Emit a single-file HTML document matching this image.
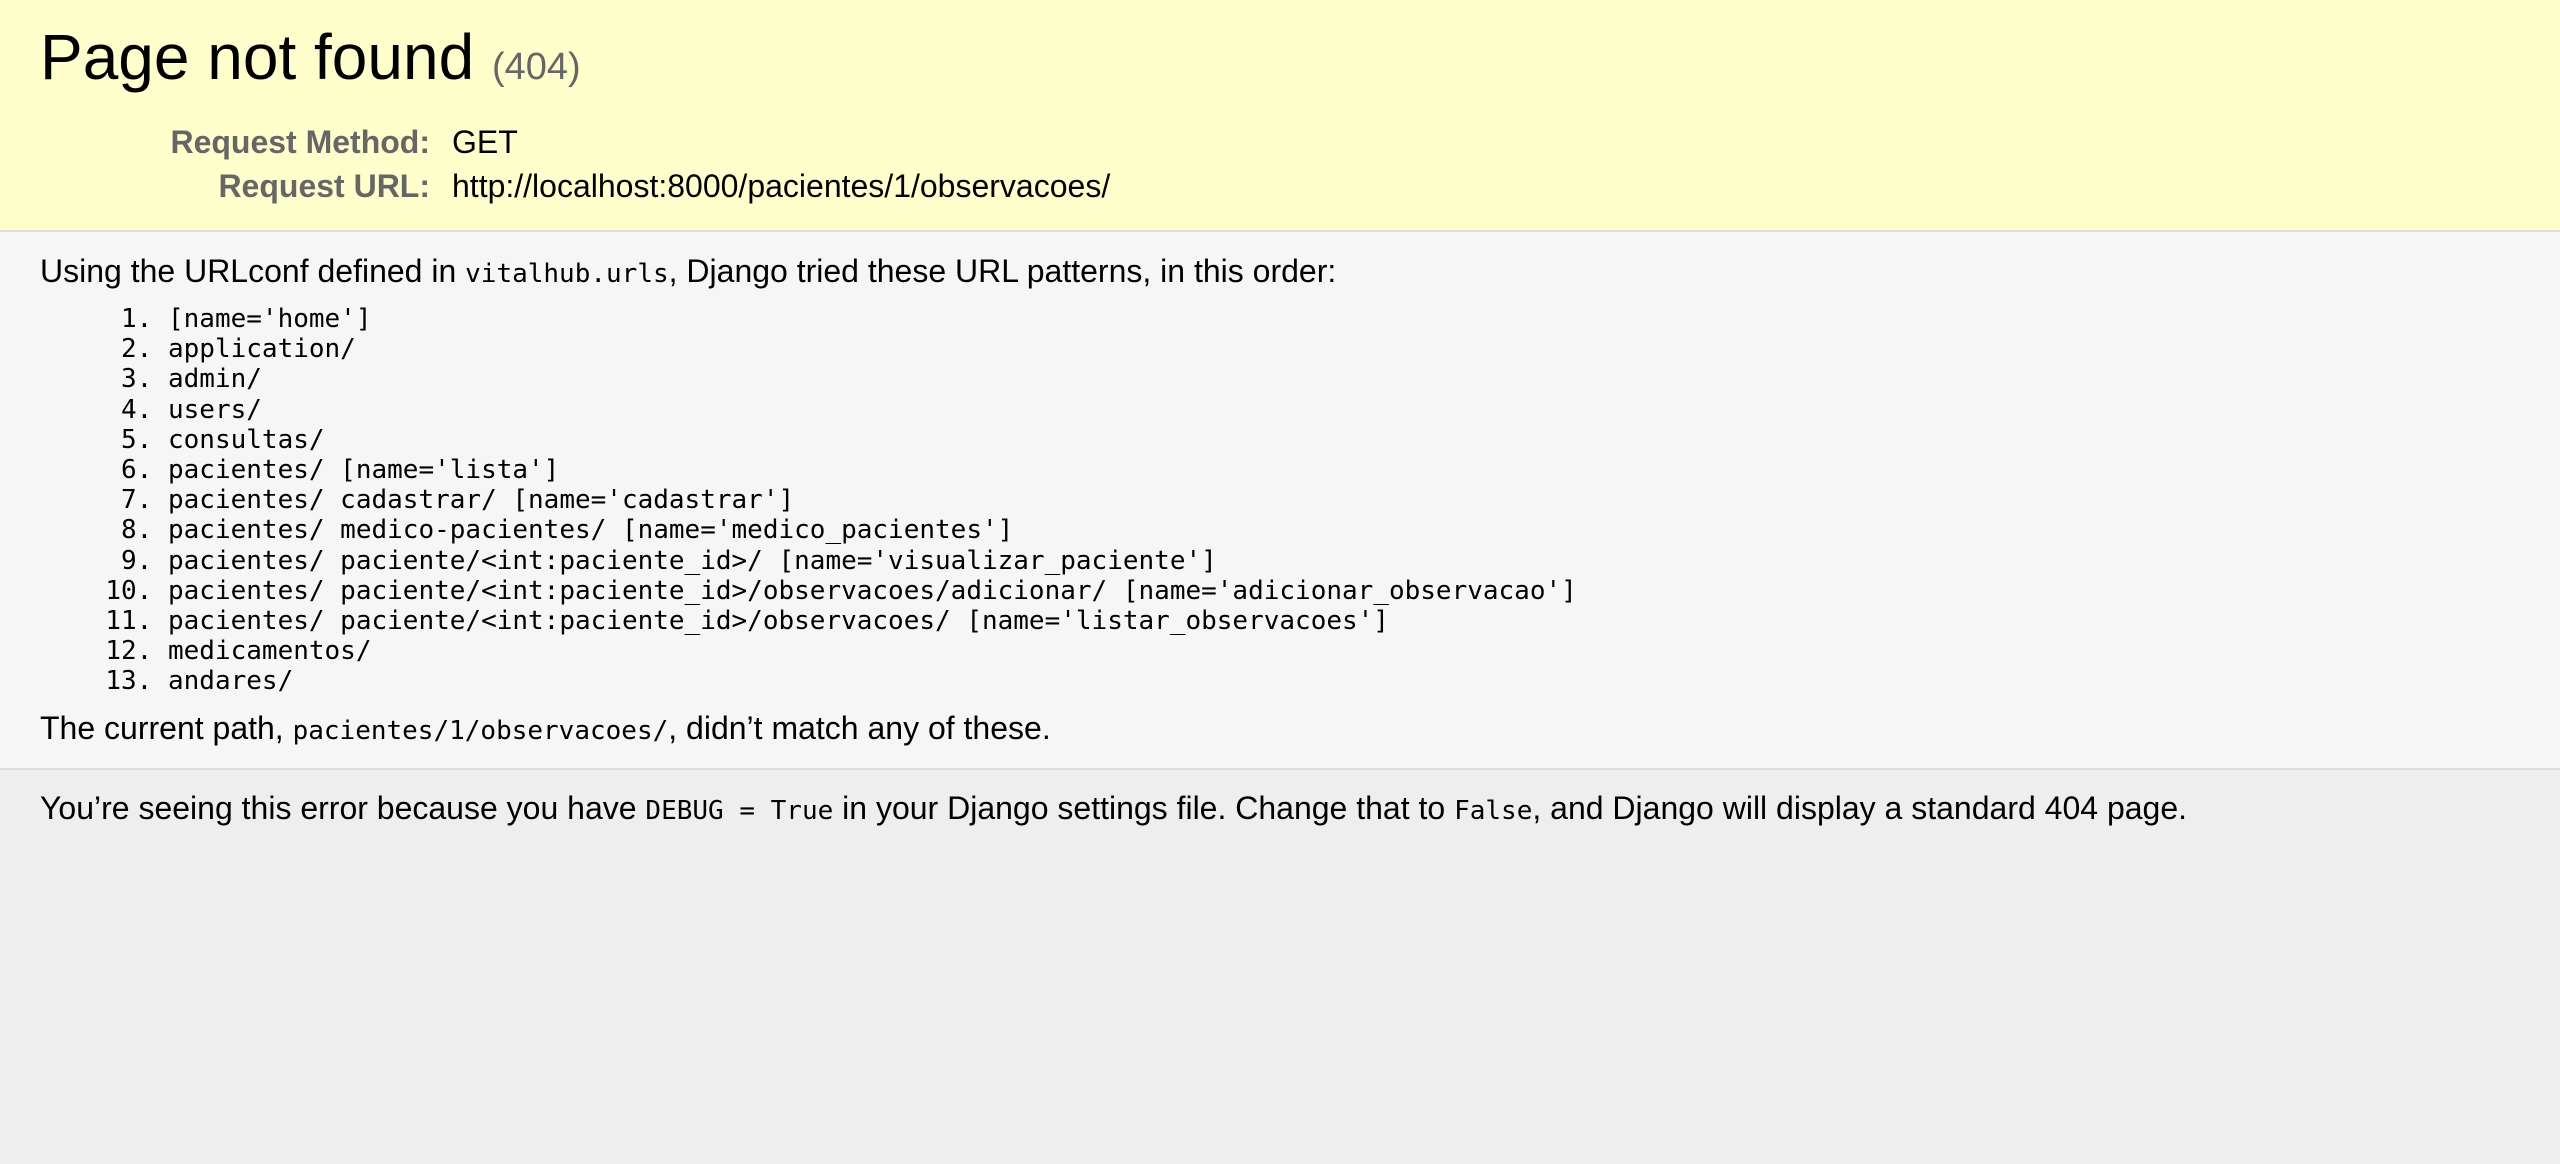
<!DOCTYPE html>
<html><head><meta charset="utf-8"><style>
html,body{margin:0;padding:0;}
body{width:2560px;height:1164px;background:#eee;font-family:"Liberation Sans",Arial,sans-serif;color:#000;position:relative;overflow:hidden;}
.sum{position:absolute;left:0;top:0;width:2560px;height:230px;background:#ffc;border-bottom:2px solid #ddd;}
.info{position:absolute;left:0;top:232px;width:2560px;height:536px;background:#f6f6f6;border-bottom:2px solid #ddd;}
.a{position:absolute;white-space:nowrap;}
h1{position:absolute;left:40px;top:21px;margin:0;font-weight:normal;font-size:64px;line-height:72px;white-space:nowrap;}
h1 span{font-size:38px;color:#666;}
.t{font-size:32px;line-height:44px;}
.lab{font-weight:bold;color:#666;text-align:right;width:430px;left:0;}
.val{left:452px;}
code,.mono{font-family:"DejaVu Sans Mono","Liberation Mono",monospace;font-size:26px;}
ol{position:absolute;left:168px;top:304px;margin:0;padding:0;font-family:"DejaVu Sans Mono","Liberation Mono",monospace;font-size:26px;line-height:30.2px;white-space:nowrap;}
ol li{padding-left:0;}
</style></head><body>
<div class="sum"></div>
<div class="info"></div>
<h1>Page not found <span>(404)</span></h1>
<div class="a t lab" style="top:120px">Request Method:</div>
<div class="a t val" style="top:120px">GET</div>
<div class="a t lab" style="top:164px">Request URL:</div>
<div class="a t val" style="top:164px">http://localhost:8000/pacientes/1/observacoes/</div>
<div class="a t" style="left:40px;top:249px">Using the URLconf defined in <code>vitalhub.urls</code>, Django tried these URL patterns, in this order:</div>
<ol>
<li>[name='home']</li>
<li>application/</li>
<li>admin/</li>
<li>users/</li>
<li>consultas/</li>
<li>pacientes/ [name='lista']</li>
<li>pacientes/ cadastrar/ [name='cadastrar']</li>
<li>pacientes/ medico-pacientes/ [name='medico_pacientes']</li>
<li>pacientes/ paciente/&lt;int:paciente_id&gt;/ [name='visualizar_paciente']</li>
<li>pacientes/ paciente/&lt;int:paciente_id&gt;/observacoes/adicionar/ [name='adicionar_observacao']</li>
<li>pacientes/ paciente/&lt;int:paciente_id&gt;/observacoes/ [name='listar_observacoes']</li>
<li>medicamentos/</li>
<li>andares/</li>
</ol>
<div class="a t" style="left:40px;top:706px">The current path, <code>pacientes/1/observacoes/</code>, didn’t match any of these.</div>
<div class="a t" style="left:40px;top:786px">You’re seeing this error because you have <code>DEBUG = True</code> in your Django settings file. Change that to <code>False</code>, and Django will display a standard 404 page.</div>
</body></html>
